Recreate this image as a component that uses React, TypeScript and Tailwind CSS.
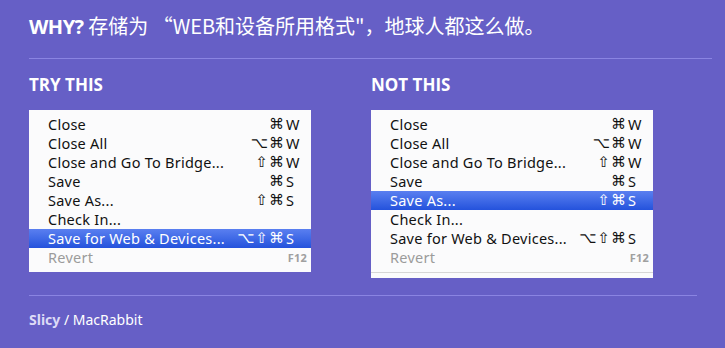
import React from 'react';

type Item = { label: string; keys?: string; mods?: string; fkey?: string; disabled?: boolean };

const items: Item[] = [
  { label: 'Close', mods: '⌘', keys: 'W' },
  { label: 'Close All', mods: '⌥⌘', keys: 'W' },
  { label: 'Close and Go To Bridge...', mods: '⇧⌘', keys: 'W' },
  { label: 'Save', mods: '⌘', keys: 'S' },
  { label: 'Save As...', mods: '⇧⌘', keys: 'S' },
  { label: 'Check In...' },
  { label: 'Save for Web & Devices...', mods: '⌥⇧⌘', keys: 'S' },
  { label: 'Revert', fkey: 'F12', disabled: true },
];

const Menu = ({ active, extra }: { active: number; extra?: boolean }) => (
  <div className="w-[282px] bg-[#fbfbfc] pt-[5px] pb-[5px] font-['Noto_Sans',sans-serif] text-[14.5px] tracking-[0.25px] leading-[19px] text-[#111]">
    {items.map((it, i) => (
      <div
        key={it.label}
        className={`flex h-[19px] items-center pl-[19px] pr-[4px] ${
          i === active ? 'bg-gradient-to-b from-[#5a7ff0] to-[#2452dc] text-white' : ''
        } ${it.disabled ? 'text-[#9b9b9b]' : ''}`}
      >
        <span className="flex-1">{it.label}</span>
        {it.keys && (
          <span className="flex items-center pr-[7px]">
            <span className="text-right font-['DejaVu_Sans',sans-serif] text-[15px] tracking-[1px]">{it.mods}</span>
            <span className="w-[15px] pl-[1px]">{it.keys}</span>
          </span>
        )}
        {it.fkey && (
          <span className={`text-[11px] font-bold ${i === active ? 'text-white' : 'text-[#a0a0a0]'}`}>{it.fkey}</span>
        )}
      </div>
    ))}
    {extra && <div className="mt-[5px] h-px bg-[#d6d6d6]" />}
  </div>
);

const App = () => {
  return (
    <div className="w-[725px] h-[348px] bg-[#665fc6] pl-[29px] text-white font-['Open_Sans','Noto_Sans_CJK_SC',sans-serif] overflow-hidden">
      {/* header */}
      <div className="h-[59px] pt-[12px] mr-[13px] border-b border-[#8a84e2] text-[20px] leading-[27px] font-['Noto_Sans_CJK_SC',sans-serif]">
        <span className="font-bold font-['Open_Sans','Noto_Sans_CJK_SC',sans-serif] tracking-[-0.5px]">WHY?</span> 存储为 “WEB和设备所用格式"，地球人都这么做。
      </div>

      {/* comparison */}
      <div className="flex gap-[60px] pt-[14px]">
        <div>
          <h2 className="text-[17px] leading-[24px] font-bold mb-[13px]">TRY THIS</h2>
          <Menu active={6} />
        </div>
        <div>
          <h2 className="text-[17px] leading-[24px] font-bold mb-[13px]">NOT THIS</h2>
          <Menu active={4} extra />
        </div>
      </div>

      {/* footer */}
      <div className="mt-[17px] mr-[28px] border-t border-[#8a84e2] pt-[14px] text-[14px] leading-[20px] font-['Noto_Sans',sans-serif]">
        <span className="font-bold text-[#dcdaf6]">Slicy</span> / MacRabbit
      </div>
    </div>
  );
};

export default App;
